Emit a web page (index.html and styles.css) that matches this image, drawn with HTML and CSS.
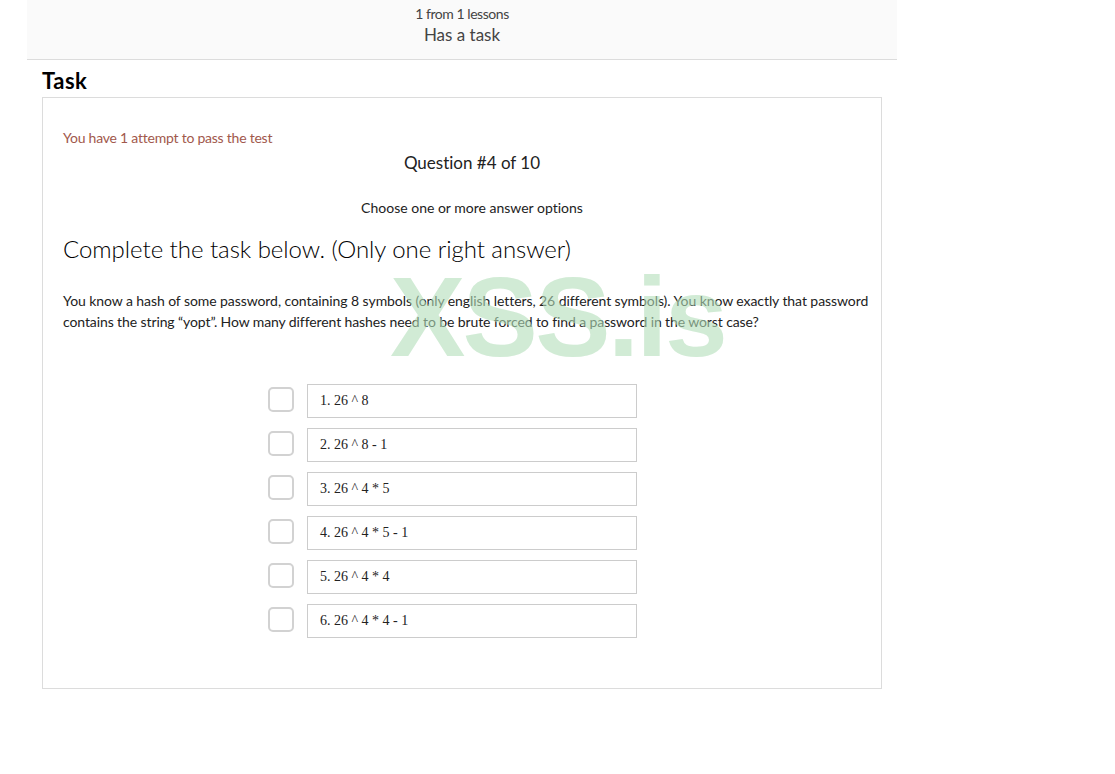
FILE: index.html
```html
<!DOCTYPE html>
<html lang="en">
<head>
  <meta charset="UTF-8">
  <meta name="viewport" content="width=device-width, initial-scale=1.0">
  <title>Task</title>
  <link rel="stylesheet" href="styles.css">
</head>
<body>
  <div class="page">
    <div class="lesson-header">
      <div class="lesson-count">1 from 1 lessons</div>
      <div class="lesson-type">Has a task</div>
    </div>

    <h1>Task</h1>

    <div class="task">
      <p class="attempts">You have 1 attempt to pass the test</p>
      <p class="counter">Question #4 of 10</p>
      <p class="hint">Choose one or more answer options</p>
      <h2>Complete the task below. (Only one right answer)</h2>

      <div class="question">
        <div class="line1">You know a hash of some password, containing 8 symbols (only english letters, 26 different symbols). You know exactly that password</div>
        <div class="line2">contains the string “yopt”. How many different hashes need to be brute forced to find a password in the worst case?</div>
        <div class="watermark">XSS.is</div>
      </div>

      <!-- Answer options -->
      <div class="answers">
        <label class="answer"><input type="checkbox"><span class="answer-text">1. 26 ^ 8</span></label>
        <label class="answer"><input type="checkbox"><span class="answer-text">2. 26 ^ 8 - 1</span></label>
        <label class="answer"><input type="checkbox"><span class="answer-text">3. 26 ^ 4 * 5</span></label>
        <label class="answer"><input type="checkbox"><span class="answer-text">4. 26 ^ 4 * 5 - 1</span></label>
        <label class="answer"><input type="checkbox"><span class="answer-text">5. 26 ^ 4 * 4</span></label>
        <label class="answer"><input type="checkbox"><span class="answer-text">6. 26 ^ 4 * 4 - 1</span></label>
      </div>
    </div>
  </div>
</body>
</html>
```
FILE: styles.css
```css
* {
  box-sizing: border-box;
}
body {
  margin: 0;
  background-color: #fff;
  font-family: Lato, sans-serif;
  font-variant-ligatures: none;
  color: #222;
}
p, h1, h2 {
  margin: 0;
}
.page {
  width: 870px;
  margin-left: 27px;
}
.lesson-header {
  height: 60px;
  padding-top: 4px;
  background-color: #fafafa;
  border-bottom: 1px solid #dcdcdc;
  text-align: center;
  color: #444;
}
.lesson-count {
  font-size: 14px;
  line-height: 20px;
  letter-spacing: -0.45px;
}
.lesson-type {
  font-size: 17px;
  line-height: 22px;
}
h1 {
  height: 37px;
  padding-left: 15px;
  font-size: 22px;
  line-height: 42px;
  letter-spacing: 0.5px;
  color: #000;
}
.task {
  width: 840px;
  height: 592px;
  margin-left: 15px;
  padding: 29px 0 0 20px;
  border: 1px solid #dcdcdc;
}
.attempts {
  font-size: 14px;
  line-height: 22px;
  letter-spacing: -0.23px;
  color: #a1584c;
}
.counter {
  margin-top: 2px;
  font-size: 17px;
  line-height: 24px;
  text-align: center;
}
.hint {
  margin-top: 22px;
  font-size: 14px;
  line-height: 22px;
  text-align: center;
}
h2 {
  margin-top: 14px;
  font-size: 24px;
  font-weight: 300;
  line-height: 32px;
  letter-spacing: -0.04px;
  color: #000;
}
.question {
  position: relative;
  height: 94px;
  margin-top: 25px;
  font-size: 14px;
  line-height: 21px;
  white-space: nowrap;
}
.line1 {
  letter-spacing: -0.075px;
}
.line2 {
  letter-spacing: -0.1px;
}
.watermark {
  position: absolute;
  left: 327px;
  top: -38px;
  font-family: "Liberation Sans", Arial, sans-serif;
  font-size: 113px;
  font-weight: bold;
  line-height: 130px;
  letter-spacing: -2.8px;
  color: rgba(178, 222, 185, 0.6);
}
.answers {
  display: flex;
  flex-direction: column;
  gap: 10px;
  padding-left: 205px;
}
.answer {
  display: flex;
  gap: 13px;
  height: 34px;
}
.answer input {
  appearance: none;
  width: 26px;
  height: 25px;
  margin: 3px 0 0;
  border: 2px solid #d2d2d2;
  border-radius: 5px;
}
.answer-text {
  width: 330px;
  padding-left: 12px;
  border: 1px solid #ccc;
  font-family: "Liberation Serif", "Times New Roman", serif;
  font-size: 14px;
  line-height: 31px;
}
```
